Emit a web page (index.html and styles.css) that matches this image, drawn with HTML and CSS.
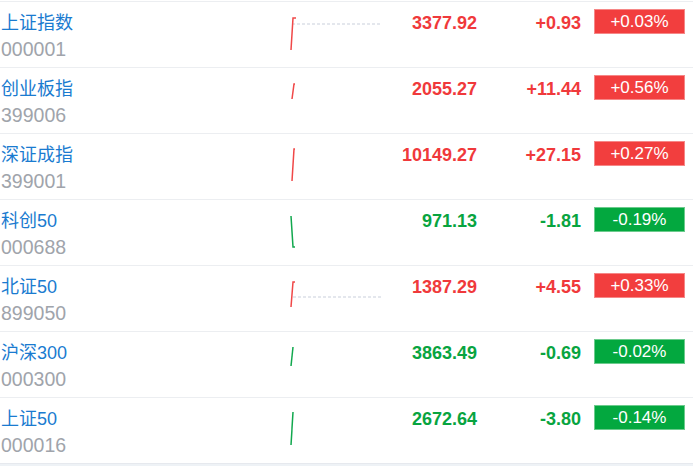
FILE: index.html
```html
<!DOCTYPE html>
<html lang="zh-CN">

<head>
    <meta charset="UTF-8">
    <meta name="viewport" content="width=device-width, initial-scale=1.0">
    <title>指数行情</title>
    <link rel="stylesheet" href="styles.css">
</head>

<body>
    <div class="quote-list">
        <div class="quote-row up">
            <div class="name-cell">
                <div class="name">上证指数</div>
                <div class="code">000001</div>
            </div>
            <div class="spark">
                <svg width="100" height="65" viewBox="0 0 100 65">
                    <line class="base" x1="7" y1="22" x2="97" y2="22" />
                    <polyline points="6,48 8,16 11,16" />
                </svg>
            </div>
            <div class="price">3377.92</div>
            <div class="change">+0.93</div>
            <div class="pct"><span>+0.03%</span></div>
        </div>

        <div class="quote-row up">
            <div class="name-cell">
                <div class="name">创业板指</div>
                <div class="code">399006</div>
            </div>
            <div class="spark">
                <svg width="100" height="65" viewBox="0 0 100 65">
                    <polyline points="7,31 9,16 10,16" />
                </svg>
            </div>
            <div class="price">2055.27</div>
            <div class="change">+11.44</div>
            <div class="pct"><span>+0.56%</span></div>
        </div>

        <div class="quote-row up">
            <div class="name-cell">
                <div class="name">深证成指</div>
                <div class="code">399001</div>
            </div>
            <div class="spark">
                <svg width="100" height="65" viewBox="0 0 100 65">
                    <polyline points="7,47 9,15 10,15" />
                </svg>
            </div>
            <div class="price">10149.27</div>
            <div class="change">+27.15</div>
            <div class="pct"><span>+0.27%</span></div>
        </div>

        <div class="quote-row down">
            <div class="name-cell">
                <div class="name">科创50</div>
                <div class="code">000688</div>
            </div>
            <div class="spark">
                <svg width="100" height="65" viewBox="0 0 100 65">
                    <polyline points="6,16 8,47 10,47" />
                </svg>
            </div>
            <div class="price">971.13</div>
            <div class="change">-1.81</div>
            <div class="pct"><span>-0.19%</span></div>
        </div>

        <div class="quote-row up">
            <div class="name-cell">
                <div class="name">北证50</div>
                <div class="code">899050</div>
            </div>
            <div class="spark">
                <svg width="100" height="65" viewBox="0 0 100 65">
                    <line class="base" x1="8" y1="31" x2="97" y2="31" />
                    <polyline points="6,41 8,16 10,16" />
                </svg>
            </div>
            <div class="price">1387.29</div>
            <div class="change">+4.55</div>
            <div class="pct"><span>+0.33%</span></div>
        </div>

        <div class="quote-row down">
            <div class="name-cell">
                <div class="name">沪深300</div>
                <div class="code">000300</div>
            </div>
            <div class="spark">
                <svg width="100" height="65" viewBox="0 0 100 65">
                    <polyline points="6,34 8,15" />
                </svg>
            </div>
            <div class="price">3863.49</div>
            <div class="change">-0.69</div>
            <div class="pct"><span>-0.02%</span></div>
        </div>

        <div class="quote-row down">
            <div class="name-cell">
                <div class="name">上证50</div>
                <div class="code">000016</div>
            </div>
            <div class="spark">
                <svg width="100" height="65" viewBox="0 0 100 65">
                    <polyline points="6,47 8,14" />
                </svg>
            </div>
            <div class="price">2672.64</div>
            <div class="change">-3.80</div>
            <div class="pct"><span>-0.14%</span></div>
        </div>
    </div>
</body>

</html>
```

FILE: styles.css
```css
body {
    margin: 0;
    background-color: #eef2f6;
    font-family: "Liberation Sans", "Noto Sans CJK SC", sans-serif;
}

.quote-list {
    background-color: #fff;
    padding-top: 1px;
}

.quote-row {
    display: grid;
    grid-template-columns: 285px 100px 92px 104px 91px;
    height: 65px;
    border-top: 1px solid #eceef1;
}

.quote-row:last-child {
    border-bottom: 1px solid #e6e9ee;
}

.name-cell {
    padding-top: 8px;
    padding-left: 1px;
}

.name {
    font-size: 18px;
    line-height: 26px;
    color: #1a7bd0;
}

.code {
    font-size: 19.5px;
    line-height: 27px;
    color: #a0a4ab;
}

.spark svg {
    display: block;
}

.spark polyline {
    fill: none;
    stroke-width: 1.5;
}

.spark .base {
    stroke: #dcdfe7;
    stroke-width: 1.5;
    stroke-dasharray: 3 2;
}

.up .spark polyline {
    stroke: #f04848;
}

.down .spark polyline {
    stroke: #11a84e;
}

.price,
.change {
    text-align: right;
    font-size: 18px;
    font-weight: bold;
    line-height: 26px;
    padding-top: 8px;
}

.pct {
    margin-left: 13px;
    width: 91px;
    padding-top: 7px;
}

.pct span {
    display: block;
    height: 23px;
    line-height: 23px;
    text-align: center;
    color: #fff;
    font-size: 17px;
}

.up .price,
.up .change {
    color: #f0393b;
}

.down .price,
.down .change {
    color: #08a43f;
}

.up .pct span {
    background-color: #f23e3e;
    border: 1px solid #f68787;
}

.down .pct span {
    background-color: #03a83f;
    border: 1px solid #6ccb8d;
}
```
